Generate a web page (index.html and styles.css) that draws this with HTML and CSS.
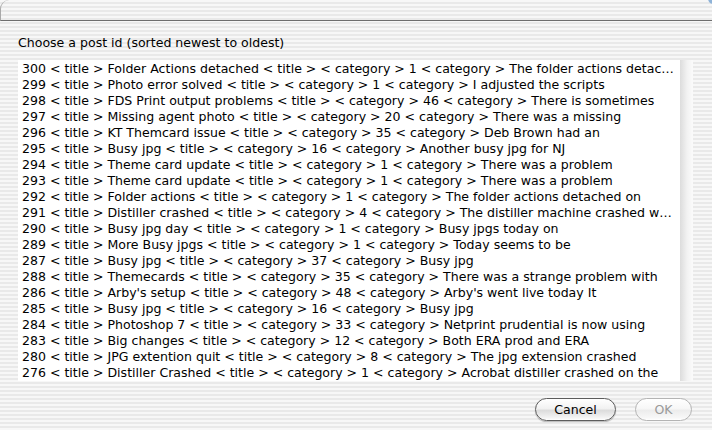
FILE: index.html
```html
<!DOCTYPE html>
<html>
<head>
<meta charset="utf-8">
<link rel="stylesheet" href="styles.css">
</head>
<body>
<div class="window">
  <div class="topbar"><span class="corner-dot"></span></div>
  <div class="label">Choose a post id (sorted newest to oldest)</div>
  <div class="listbox">
    <ul class="list">
      <li>300 &lt; title &gt; Folder Actions detached &lt; title &gt; &lt; category &gt; 1 &lt; category &gt; The folder actions detac…</li>
      <li>299 &lt; title &gt; Photo error solved &lt; title &gt; &lt; category &gt; 1 &lt; category &gt; I adjusted the scripts</li>
      <li>298 &lt; title &gt; FDS Print output problems &lt; title &gt; &lt; category &gt; 46 &lt; category &gt; There is sometimes</li>
      <li>297 &lt; title &gt; Missing agent photo &lt; title &gt; &lt; category &gt; 20 &lt; category &gt; There was a missing</li>
      <li>296 &lt; title &gt; KT Themcard issue &lt; title &gt; &lt; category &gt; 35 &lt; category &gt; Deb Brown had an</li>
      <li>295 &lt; title &gt; Busy jpg &lt; title &gt; &lt; category &gt; 16 &lt; category &gt; Another busy jpg for NJ</li>
      <li>294 &lt; title &gt; Theme card update &lt; title &gt; &lt; category &gt; 1 &lt; category &gt; There was a problem</li>
      <li>293 &lt; title &gt; Theme card update &lt; title &gt; &lt; category &gt; 1 &lt; category &gt; There was a problem</li>
      <li>292 &lt; title &gt; Folder actions &lt; title &gt; &lt; category &gt; 1 &lt; category &gt; The folder actions detached on</li>
      <li>291 &lt; title &gt; Distiller crashed &lt; title &gt; &lt; category &gt; 4 &lt; category &gt; The distiller machine crashed w…</li>
      <li>290 &lt; title &gt; Busy jpg day &lt; title &gt; &lt; category &gt; 1 &lt; category &gt; Busy jpgs today on</li>
      <li>289 &lt; title &gt; More Busy jpgs &lt; title &gt; &lt; category &gt; 1 &lt; category &gt; Today seems to be</li>
      <li>287 &lt; title &gt; Busy jpg &lt; title &gt; &lt; category &gt; 37 &lt; category &gt; Busy jpg</li>
      <li>288 &lt; title &gt; Themecards &lt; title &gt; &lt; category &gt; 35 &lt; category &gt; There was a strange problem with</li>
      <li>286 &lt; title &gt; Arby's setup &lt; title &gt; &lt; category &gt; 48 &lt; category &gt; Arby's went live today It</li>
      <li>285 &lt; title &gt; Busy jpg &lt; title &gt; &lt; category &gt; 16 &lt; category &gt; Busy jpg</li>
      <li>284 &lt; title &gt; Photoshop 7 &lt; title &gt; &lt; category &gt; 33 &lt; category &gt; Netprint prudential is now using</li>
      <li>283 &lt; title &gt; Big changes &lt; title &gt; &lt; category &gt; 12 &lt; category &gt; Both ERA prod and ERA</li>
      <li>280 &lt; title &gt; JPG extention quit &lt; title &gt; &lt; category &gt; 8 &lt; category &gt; The jpg extension crashed</li>
      <li>276 &lt; title &gt; Distiller Crashed &lt; title &gt; &lt; category &gt; 1 &lt; category &gt; Acrobat distiller crashed on the</li>
    </ul>
    <div class="track"></div>
  </div>
  <div class="buttons">
    <button class="btn">Cancel</button>
    <button class="btn disabled">OK</button>
  </div>
</div>
</body>
</html>
```

FILE: styles.css
```css
html, body {
  margin: 0;
  padding: 0;
}
body {
  width: 712px;
  height: 430px;
  overflow: hidden;
  font-family: "DejaVu Sans", "Liberation Sans", sans-serif;
  font-size: 12.55px;
  color: #000;
  background: repeating-linear-gradient(to bottom, #f7f7f7 0, #f7f7f7 2px, #e9e9e9 2px, #e9e9e9 4px);
}
.window {
  display: flex;
  flex-direction: column;
  height: 430px;
}
.topbar {
  position: relative;
  height: 21px;
  border-bottom: 1px solid #6e6e6e;
  border-left: 1px solid #a9a9a9;
  border-top-left-radius: 9px;
  box-sizing: border-box;
  flex: none;
}
.corner-dot {
  position: absolute;
  right: -7px;
  top: -7px;
  width: 11px;
  height: 11px;
  border-radius: 50%;
  background: #8fb3d8;
}
.label {
  margin: 14px 0 0 18px;
  height: 16px;
  line-height: 16px;
}
.listbox {
  display: flex;
  margin: 9px 0 0 18px;
  width: 675px;
  height: 321px;
  flex: none;
}
.list {
  list-style: none;
  margin: 0;
  padding: 1px 0 0 0;
  width: 662px;
  background: #fff;
  overflow: hidden;
}
.list li {
  height: 16px;
  line-height: 16px;
  padding-left: 4px;
  white-space: nowrap;
  overflow: hidden;
}
.track {
  flex: 1;
  background: linear-gradient(to right, #dcdcdc, #f2f2f2 55%, #fbfbfb);
}
.buttons {
  display: flex;
  justify-content: flex-end;
  gap: 19px;
  margin-top: 17px;
  padding-right: 20px;
}
.btn {
  height: 23px;
  padding: 0;
  border: 1px solid #5c5c5c;
  border-radius: 12px;
  background: linear-gradient(to bottom, #ffffff 0%, #f2f2f2 45%, #dcdcdc 55%, #f4f4f4 90%, #ffffff 100%);
  box-shadow: 0 1px 1px rgba(0,0,0,0.25);
  font-family: "DejaVu Sans", "Liberation Sans", sans-serif;
  font-size: 12.55px;
  color: #000;
  width: 81px;
}
.btn.disabled {
  width: 57px;
  border-color: #b4b4b4;
  color: #9a9a9a;
  box-shadow: none;
  background: linear-gradient(to bottom, #ffffff 0%, #f7f7f7 45%, #ececec 55%, #f8f8f8 90%, #ffffff 100%);
}
```
